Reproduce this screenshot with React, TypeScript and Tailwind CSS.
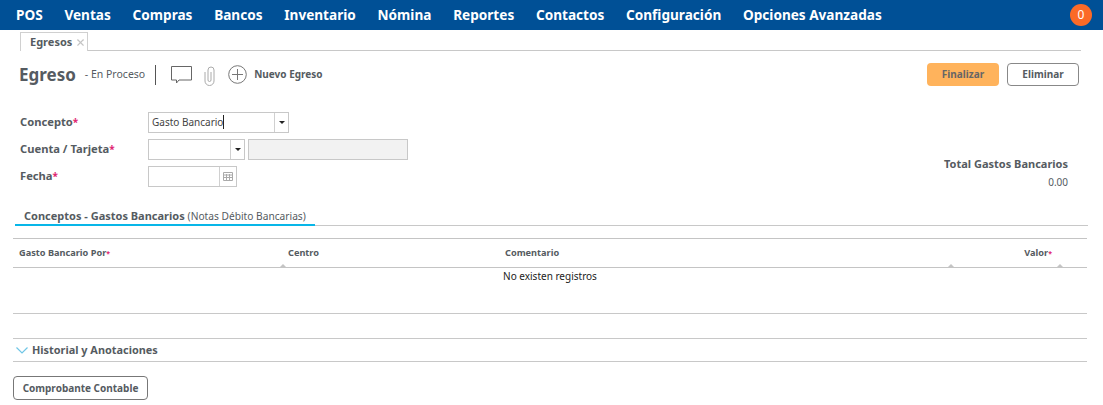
import { X } from 'lucide-react'

const NAV_ITEMS = ['POS', 'Ventas', 'Compras', 'Bancos', 'Inventario', 'Nómina', 'Reportes', 'Contactos', 'Configuración', 'Opciones Avanzadas']

function Caret() {
  return <span className="w-0 h-0 border-x-[3px] border-x-transparent border-t-[3px] border-t-[#222]" />
}

function FormLabel({ text }: { text: string }) {
  return (
    <div className="w-[128px] text-[11.2px] font-bold text-[#555b61] leading-[21px] -mt-[1px]">
      {text}
      <span className="text-[#e0246f] text-[10px]">*</span>
    </div>
  )
}

function HeadStar() {
  return <span className="text-[#e0246f] text-[7px]">*</span>
}

function SortMark({ className }: { className: string }) {
  return <span className={`absolute bottom-0 w-0 h-0 border-x-[3px] border-x-transparent border-b-[3px] border-b-[#c4c4c4] ${className}`} />
}

export default function App() {
  return (
    <div className="w-[1103px] h-[405px] bg-white overflow-hidden font-['Noto_Sans',sans-serif] text-[#555b61]">
      <nav className="h-[30px] bg-[#005096] flex items-center pl-[16px] pr-[11px]">
        <div className="flex gap-[21.75px] text-[13.6px] font-bold text-white">
          {NAV_ITEMS.map((item) => (
            <span key={item}>{item}</span>
          ))}
        </div>
        <span className="ml-auto w-[22px] h-[22px] rounded-full bg-[#fb6a27] text-white text-[12px] flex items-center justify-center">0</span>
      </nav>

      <div className="ml-[20px] mr-[22px] mt-[2px] h-[19px] border-b border-[#c8c8c8]">
        <div className="w-[68px] h-[19px] bg-white border border-b-0 border-[#d0d0d0] flex items-center pl-[9px] gap-[3px] text-[11px] font-bold">
          Egresos
          <X size={11} strokeWidth={2.5} className="text-[#c4c4c4]" />
        </div>
      </div>

      <div className="flex items-center ml-[19px] mr-[24px] mt-[11px] h-[25px]">
        <h1 className="text-[17px] font-bold text-[#555b61]">Egreso</h1>
        <span className="ml-[9px] text-[10.5px]">- En Proceso</span>
        <span className="ml-[10px] w-px h-[20px] bg-[#555]" />
        <svg className="ml-[15px]" width="22" height="20" viewBox="0 0 22 20" fill="none" stroke="#666" strokeWidth="1">
          <path d="M0.5 1.5h20v13.5h-12.5l-2.5 3v-3h-5z" />
        </svg>
        <svg className="ml-[10px] mt-[2px]" width="14" height="20" viewBox="0 0 14 20" fill="none" stroke="#aaa" strokeWidth="1">
          <path d="M2 6v9a4.5 4.5 0 0 0 9 0V4a3 3 0 0 0-6 0v10a1.5 1.5 0 0 0 3 0V6" />
        </svg>
        <svg className="ml-[11px]" width="19" height="19" viewBox="0 0 19 19" fill="none" stroke="#777" strokeWidth="1">
          <circle cx="9.5" cy="9.5" r="8.8" />
          <path d="M9.5 4v11M4 9.5h11" />
        </svg>
        <span className="ml-[7px] text-[10px] font-bold">Nuevo Egreso</span>
        <button className="ml-auto w-[72px] h-[23px] rounded-[4px] bg-[#ffb35c] text-[10px] font-bold text-[#666]">Finalizar</button>
        <button className="ml-[8px] w-[72px] h-[23px] rounded-[4px] border border-[#888] bg-white text-[10px] font-bold">Eliminar</button>
      </div>

      <div className="flex ml-[20px] mr-[35px] mt-[25px] h-[89px]">
        <div className="flex flex-col gap-[6px]">
          <div className="flex items-center">
            <FormLabel text="Concepto" />
            <div className="w-[141px] h-[21px] border border-[#c8c8c8] flex">
              <span className="flex-1 pl-[3px] text-[10px] leading-[19px] text-[#444] border-r border-[#d0d0d0]">
                <span className="border-r border-[#222]">Gasto Bancario</span>
              </span>
              <span className="w-[13px] flex items-center justify-center"><Caret /></span>
            </div>
          </div>
          <div className="flex items-center">
            <FormLabel text="Cuenta / Tarjeta" />
            <div className="w-[97px] h-[21px] border border-[#c8c8c8] flex">
              <span className="flex-1 border-r border-[#d0d0d0]" />
              <span className="w-[13px] flex items-center justify-center"><Caret /></span>
            </div>
            <div className="ml-[3px] w-[160px] h-[21px] border border-[#c8c8c8] bg-[#f2f2f2]" />
          </div>
          <div className="flex items-center">
            <FormLabel text="Fecha" />
            <div className="w-[89px] h-[21px] border border-[#c8c8c8] flex">
              <span className="flex-1 border-r border-[#d0d0d0]" />
              <span className="w-[16px] flex items-center justify-center">
                <svg width="10" height="9" viewBox="0 0 10 9" fill="none" stroke="#aaa" strokeWidth="1">
                  <path d="M0.5 0.5h9v8h-9zM0.5 3h9M0.5 5.5h9M3.5 2v6.5M6.5 2v6.5" />
                </svg>
              </span>
            </div>
          </div>
        </div>
        <div className="ml-auto mt-[44px] text-right">
          <div className="text-[11px] font-bold leading-[16px]">Total Gastos Bancarios</div>
          <div className="text-[10px] leading-[20px]">0.00</div>
        </div>
      </div>

      <div className="mx-[15px] mt-[7px] border-b border-[#c8c8c8] h-[18px]">
        <div className="w-[300px] h-[18px] border-b-2 border-[#08b6e8] pl-[9px] text-[11px] leading-[15px] whitespace-nowrap">
          <span className="font-bold">Conceptos - Gastos Bancarios</span> <span className="text-[10.2px]">(Notas Débito Bancarias)</span>
        </div>
      </div>

      <div className="ml-[13px] mr-[16px] mt-[12px] h-[30px] border-y border-[#c4c4c4] relative flex items-center text-[9.2px] font-bold">
        <span className="absolute left-[6px]">Gasto Bancario Por<HeadStar /></span>
        <span className="absolute left-[275px]">Centro</span>
        <span className="absolute left-[492px]">Comentario</span>
        <span className="absolute right-[35px]">Valor<HeadStar /></span>
        <SortMark className="left-[267px]" />
        <SortMark className="left-[935px]" />
        <SortMark className="left-[1044px]" />
      </div>
      <div className="ml-[13px] mr-[16px] h-[46px] border-b border-[#c8c8c8] text-center text-[10px] text-[#222] pt-[1px]">No existen registros</div>

      <div className="ml-[13px] mr-[16px] mt-[24px] h-[24px] border-y border-[#c8c8c8] flex items-center text-[10.9px] font-bold">
        <svg className="ml-[3px] mr-[4px]" width="12" height="7" viewBox="0 0 12 7" fill="none" stroke="#6fc6e6" strokeWidth="1.2">
          <path d="M0.5 0.5l5.5 5.5 5.5-5.5" />
        </svg>
        Historial y Anotaciones
      </div>

      <button className="block ml-[13px] mt-[14px] w-[135px] h-[24px] rounded-[4px] border border-[#777] bg-white text-[10px] font-bold">Comprobante Contable</button>
    </div>
  )
}
